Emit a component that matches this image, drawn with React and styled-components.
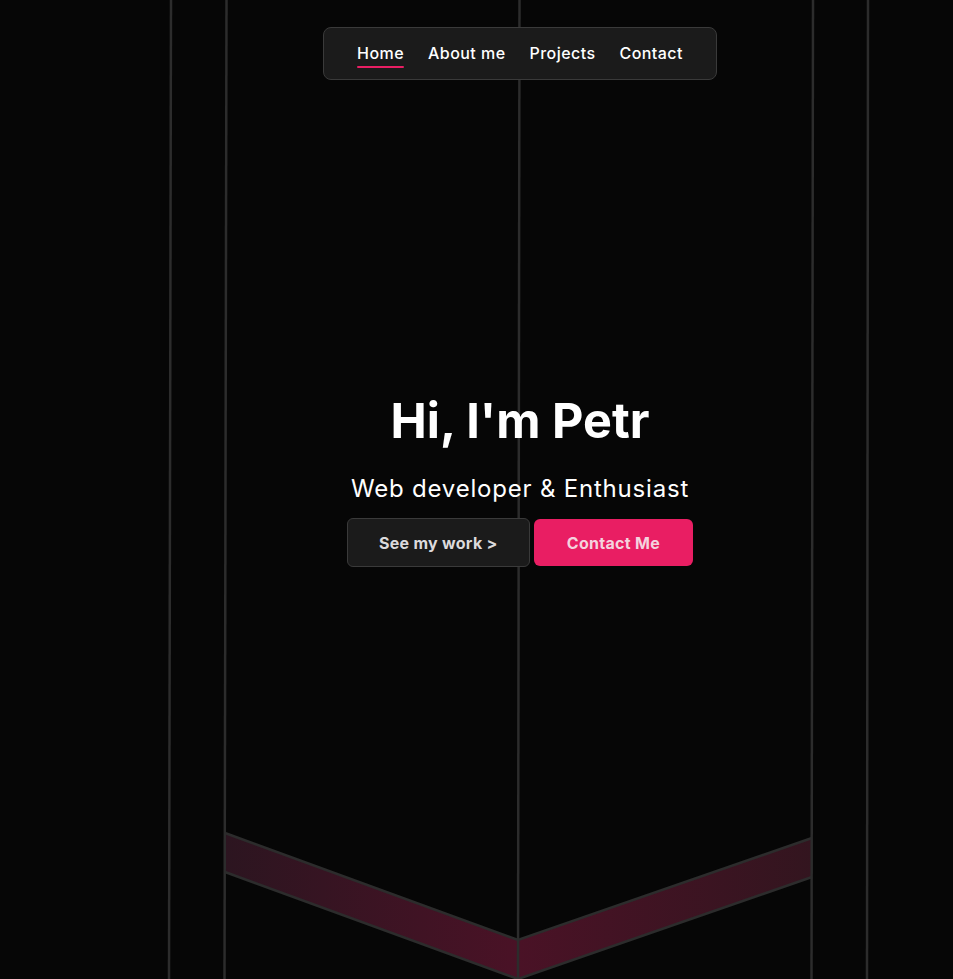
import React from "react";
import styled, { createGlobalStyle } from "styled-components";

const Global = createGlobalStyle`
  html, body { margin: 0; padding: 0; background: #060606; }
  body { font-family: Inter, "Noto Sans", sans-serif; color: #fff; overflow: hidden; }
  * { box-sizing: border-box; }
`;

const Page = styled.div`
  position: relative;
  min-height: 100vh;
  background: #060606;
  overflow: hidden;
`;

const Backdrop = styled.svg`
  position: absolute;
  inset: 0;
  width: 100%;
  height: 100%;
  z-index: 0;
`;

const Layout = styled.div`
  position: relative;
  z-index: 1;
  height: 100vh;
  padding-left: 87px;
  display: flex;
  flex-direction: column;
  align-items: center;
`;

const Nav = styled.nav`
  margin-top: 27px;
  height: 53px;
  padding: 0 33px;
  display: flex;
  align-items: center;
  gap: 24px;
  background: #1b1b1b;
  border: 1px solid #3a3a3a;
  border-radius: 8px;
`;

const NavLink = styled.a`
  position: relative;
  font-size: 16px;
  font-weight: 500;
  letter-spacing: 0.45px;
  color: #fff;
  text-decoration: none;
  line-height: 20px;
  padding-bottom: 2px;
  ${(p) =>
    p.$active &&
    `
    &::after {
      content: "";
      position: absolute;
      left: 0;
      right: 0;
      bottom: -3px;
      height: 2px;
      border-radius: 2px;
      background: #e91e63;
    }
  `}
`;

const Hero = styled.section`
  flex: 1;
  display: flex;
  flex-direction: column;
  align-items: center;
  justify-content: center;
  padding-bottom: 101px;
`;

const Title = styled.h1`
  margin: 0;
  font-size: 48.5px;
  font-weight: 700;
  line-height: 60px;
  color: #fff;
`;

const Subtitle = styled.p`
  margin: 23px 0 14px;
  font-size: 24px;
  font-weight: 400;
  letter-spacing: 0.8px;
  line-height: 30px;
  color: #fff;
`;

const Actions = styled.div`
  display: flex;
  align-items: center;
  gap: 4px;
`;

const Button = styled.a`
  display: flex;
  align-items: center;
  justify-content: center;
  height: ${(p) => (p.$primary ? "47px" : "49px")};
  padding: 0 ${(p) => (p.$primary ? "33px" : "31px")};
  border-radius: 6px;
  font-size: 16px;
  font-weight: 700;
  letter-spacing: 0.3px;
  text-decoration: none;
  color: ${(p) => (p.$primary ? "#f4d3de" : "#dcdadc")};
  background: ${(p) => (p.$primary ? "#e91e63" : "#1b1b1b")};
  border: ${(p) => (p.$primary ? "none" : "1px solid #3a3a3a")};
`;

function Corridor() {
  const line = "#2c2c2c";
  return (
    <Backdrop viewBox="0 0 953 979" preserveAspectRatio="none">
      <defs>
        <linearGradient id="band" x1="0" x2="1" y1="0" y2="0">
          <stop offset="0" stopColor="#2c1520" />
          <stop offset="0.5" stopColor="#4a1226" />
          <stop offset="1" stopColor="#33151f" />
        </linearGradient>
      </defs>
      <polygon
        points="225,833 518,940 812,838 812,877 518,979 225,872"
        fill="url(#band)"
      />
      <polyline points="225,833 518,940 812,838" fill="none" stroke={line} strokeWidth="2.5" />
      <polyline points="225,872 518,979 812,877" fill="none" stroke={line} strokeWidth="2.5" />
      <line x1="171" y1="0" x2="169" y2="979" stroke={line} strokeWidth="2.5" />
      <line x1="226.5" y1="0" x2="224.5" y2="979" stroke={line} strokeWidth="2.5" />
      <line x1="519.5" y1="0" x2="518" y2="979" stroke={line} strokeWidth="2.5" />
      <line x1="813" y1="0" x2="811.5" y2="979" stroke={line} strokeWidth="2.5" />
      <line x1="868" y1="0" x2="867" y2="979" stroke={line} strokeWidth="2.5" />
    </Backdrop>
  );
}

export default function App() {
  return (
    <>
      <Global />
      <Page>
        <Corridor />
        <Layout>
          <Nav>
            <NavLink href="#" $active>Home</NavLink>
            <NavLink href="#">About me</NavLink>
            <NavLink href="#">Projects</NavLink>
            <NavLink href="#">Contact</NavLink>
          </Nav>
          <Hero>
            <Title>Hi, I'm Petr</Title>
            <Subtitle>Web developer &amp; Enthusiast</Subtitle>
            <Actions>
              <Button href="#">See my work &gt;</Button>
              <Button href="#" $primary>Contact Me</Button>
            </Actions>
          </Hero>
        </Layout>
      </Page>
    </>
  );
}
